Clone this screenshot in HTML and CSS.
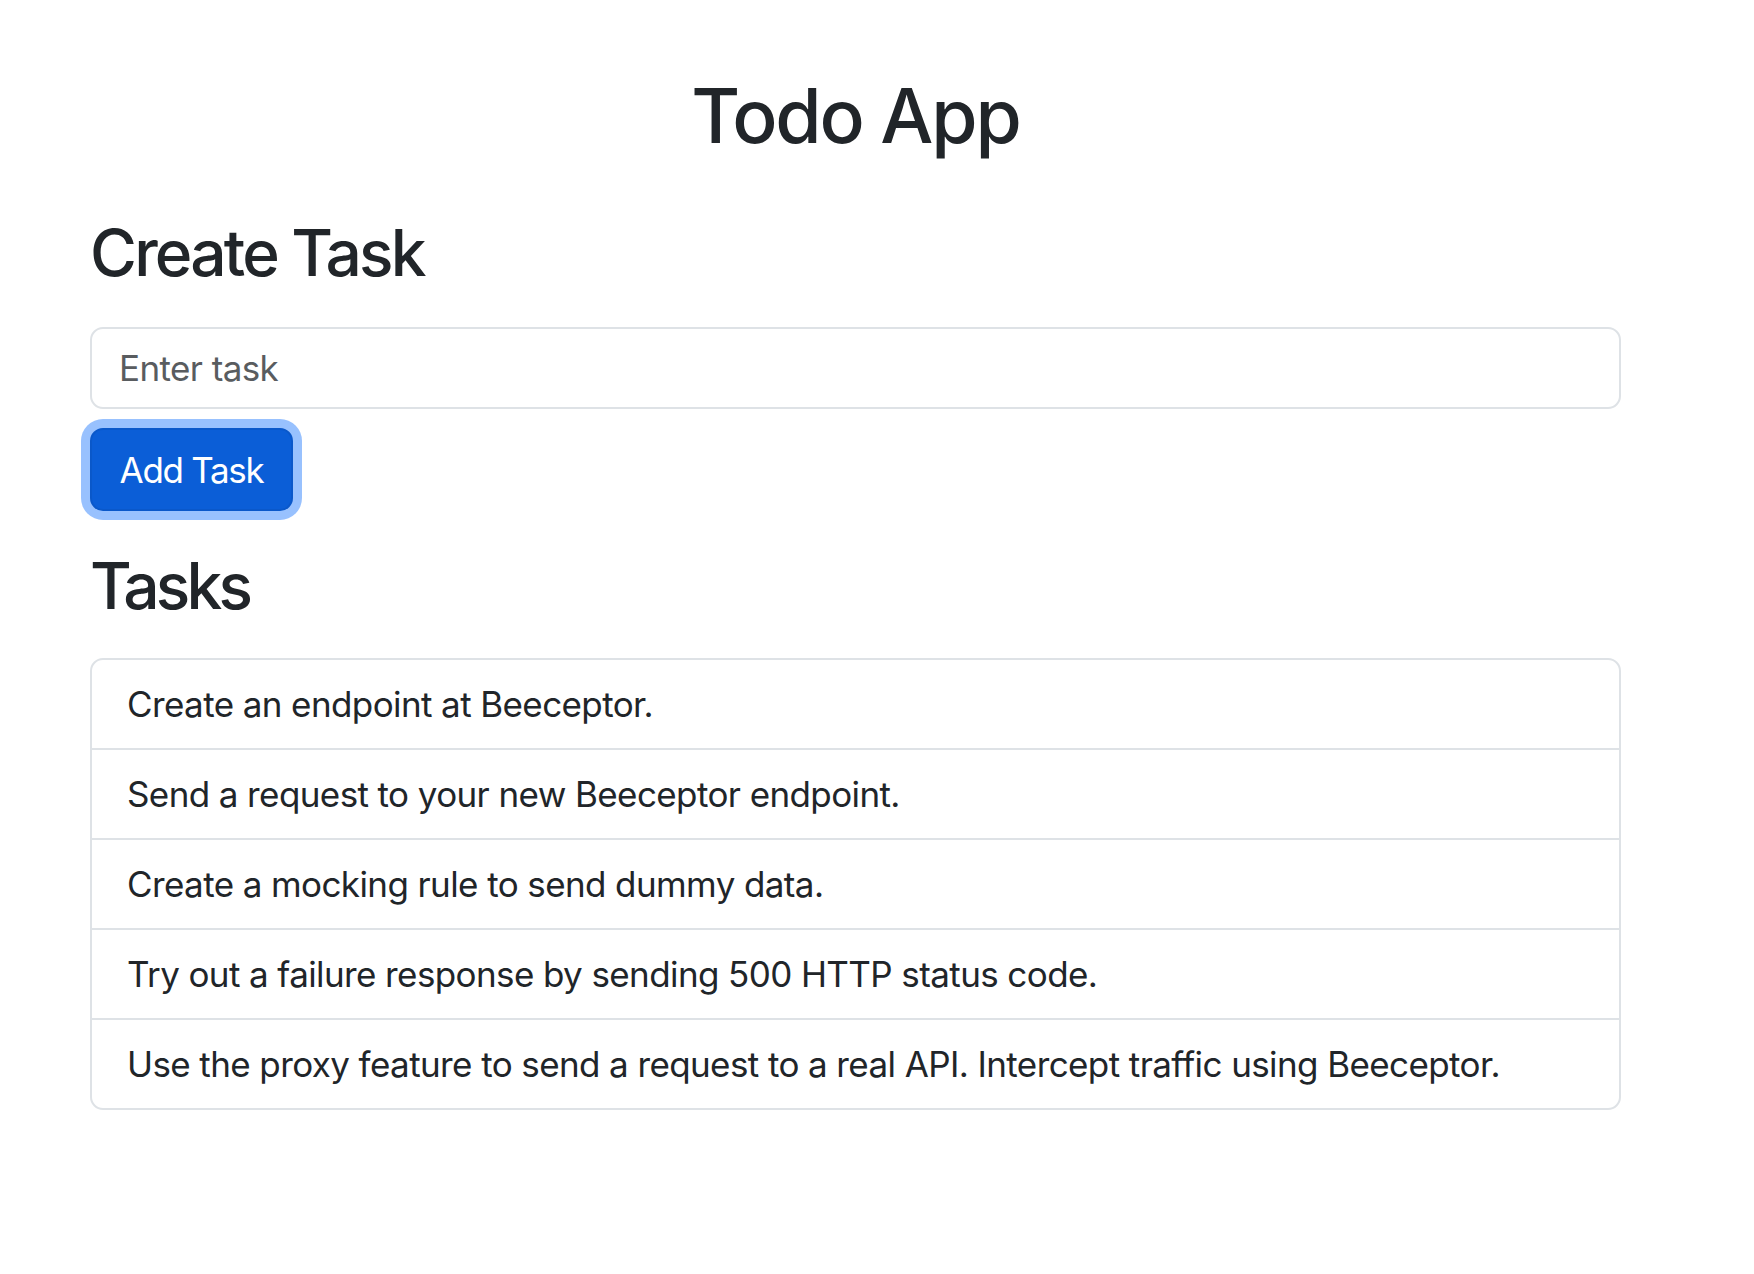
FILE: index.html
```html
<!DOCTYPE html>
<html lang="en">
<head>
<meta charset="utf-8">
<title>Todo App</title>
<link rel="stylesheet" href="styles.css">
</head>
<body>
<div class="container">
  <h1 class="title">Todo App</h1>
  <h2 class="section-title create">Create Task</h2>
  <input class="task-input" type="text" placeholder="Enter task">
  <button class="btn-add" type="button">Add Task</button>
  <h2 class="section-title tasks">Tasks</h2>
  <ul class="task-list">
    <li class="task-item">Create an endpoint at Beeceptor.</li>
    <li class="task-item">Send a request to your new Beeceptor endpoint.</li>
    <li class="task-item">Create a mocking rule to send dummy data.</li>
    <li class="task-item">Try out a failure response by sending 500 HTTP status code.</li>
    <li class="task-item">Use the proxy feature to send a request to a real API. Intercept traffic using Beeceptor.</li>
  </ul>
</div>
</body>
</html>
```

FILE: styles.css
```css
* { box-sizing: border-box; }
html, body { margin: 0; padding: 0; background: #fff; }
body {
  font-family: Inter, "Noto Sans", "Liberation Sans", sans-serif;
  color: #212529;
  letter-spacing: -0.6px;
}
.container {
  width: 1531px;
  margin-left: 90px;
  padding-top: 71px;
  display: flex;
  flex-direction: column;
  align-items: flex-start;
}
.title {
  align-self: stretch;
  text-align: center;
  font-size: 75px;
  line-height: 90px;
  font-weight: 500;
  letter-spacing: -2.2px;
  margin: 0;
}
.section-title {
  font-size: 64px;
  line-height: 77px;
  font-weight: 500;
  letter-spacing: -2.8px;
  margin: 0;
}
.create { margin-top: 53px; }
.tasks { margin-top: 36px; letter-spacing: -3.8px; }
.task-input {
  margin-top: 36px;
  width: 100%;
  height: 82px;
  border: 2px solid #dee2e6;
  border-radius: 13px;
  padding: 0 27px;
  font-family: inherit;
  font-size: 35px;
  letter-spacing: -0.6px;
  color: #212529;
  background: #fff;
  outline: none;
}
.task-input::placeholder { color: #595c5f; opacity: 1; }
.btn-add {
  margin-top: 19px;
  width: 203px;
  height: 83px;
  padding: 0;
  border: 2px solid #0a58ca;
  border-radius: 13px;
  background: #0b5ed7;
  color: #fff;
  font-family: inherit;
  font-size: 35px;
  letter-spacing: -1.3px;
  text-align: center;
  white-space: nowrap;
  box-shadow: 0 0 0 9px #98c1fe;
  cursor: pointer;
}
.task-list {
  margin: 34px 0 0;
  padding: 0;
  list-style: none;
  width: 100%;
  border: 2px solid #dee2e6;
  border-radius: 13px;
}
.task-item {
  font-size: 35px;
  line-height: 53px;
  padding: 17.5px 35px;
}
.task-item + .task-item { border-top: 2px solid #dee2e6; }
```
